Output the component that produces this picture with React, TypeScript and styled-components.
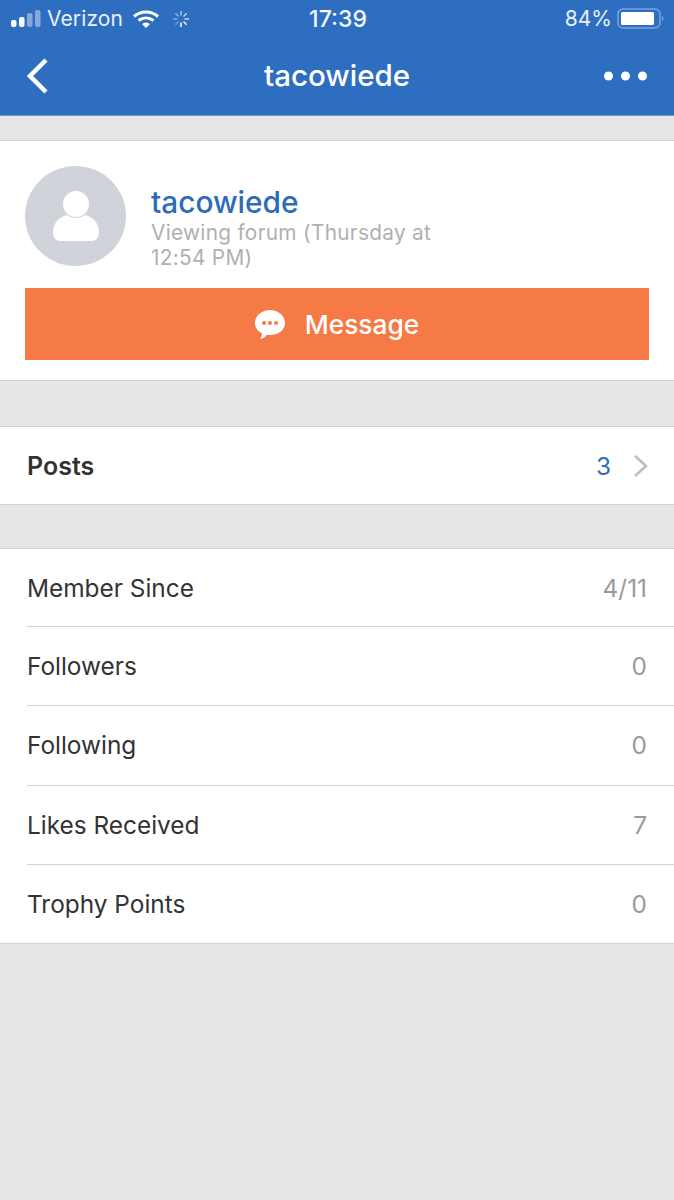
import React from "react";
import styled, { createGlobalStyle } from "styled-components";

const Global = createGlobalStyle`
  html, body { margin: 0; padding: 0; background: #e6e6e6; }
  body { font-family: Inter, "Liberation Sans", sans-serif; -webkit-font-smoothing: antialiased; }
`;
const Page = styled.div`width: 674px; height: 1200px; background: #e6e6e6; overflow: hidden;`;
const Header = styled.header`height: 115px; background: #2d6ec0; border-bottom: 1px solid #6f96c9; color: #fff; display: flex; flex-direction: column;`;
const StatusBar = styled.div`height: 37px; display: grid; grid-template-columns: 1fr auto 1fr; align-items: center; padding: 0 9px 0 11px; font-size: 21px; color: #e9f0f9;`;
const StatusLeft = styled.div`display: flex; align-items: center;`;
const StatusRight = styled.div`display: flex; align-items: center; justify-content: flex-end; gap: 5px;`;
const Carrier = styled.span`margin-left: 6px; margin-right: 10px; letter-spacing: 0.1px;`;
const Clock = styled.span`font-size: 23px; font-weight: 500; color: #f4f7fc;`;
const NavBar = styled.div`flex: 1; display: grid; grid-template-columns: 1fr auto 1fr; align-items: center; padding: 0 27px;`;
const BackIcon = styled.svg`margin-left: -2px;`;
const NavTitle = styled.div`font-size: 29.500px; font-weight: 500; margin-bottom: 2px;`;
const NavRight = styled.div`display: flex; justify-content: flex-end;`;
const Section = styled.section<{ $top: number }>`margin-top: ${(p) => p.$top}px; background: #fff; border-top: 1px solid #d3d3d3; border-bottom: 1px solid #d3d3d3;`;
const Profile = styled.div`padding: 25px 25px 20px; display: flex; flex-direction: column; gap: 22px;`;
const ProfileTop = styled.div`height: 100px; display: flex; align-items: flex-start; gap: 25px;`;
const Avatar = styled.div`width: 101px; height: 100px; flex: none; border-radius: 50%; background: #d0d4da; display: flex; align-items: center; justify-content: center;`;
const ProfileText = styled.div`width: 300px; padding-top: 18px;`;
const Name = styled.div`font-size: 29.800px; line-height: 36px; font-weight: 500; color: #2d6cb8;`;
const Status = styled.div`font-size: 20.800px; line-height: 25px; color: #b0b0b0; letter-spacing: 0.3px;`;
const MessageButton = styled.button`height: 72px; width: 100%; border: 0; padding: 0; border-radius: 1px; background: #f67a46; color: #fff; font: 500 26.300px Inter, sans-serif; display: flex; align-items: center; justify-content: center; gap: 20px;`;
const Row = styled.div`height: 77px; display: flex; align-items: center; justify-content: space-between; padding: 0 27px 0 0; margin-left: 27px; font-size: 24.400px; color: #333;
  & + & { height: 78.250px; border-top: 1px solid #d3d3d3; }`;
const PostsTitle = styled.span`font-size: 25px; font-weight: 600; color: #333;`;
const PostsRight = styled.div`display: flex; align-items: center; gap: 22px; color: #2d6cb8; margin-right: -2px;`;
const Value = styled.span`color: #9a9a9a;`;

const stats: [string, string][] = [
  ["Member Since", "4/11"],
  ["Followers", "0"],
  ["Following", "0"],
  ["Likes Received", "7"],
  ["Trophy Points", "0"],
];

export default function App() {
  return (
    <Page>
      <Global />
      <Header>
        <StatusBar>
          <StatusLeft>
            <svg width="30" height="18" viewBox="0 0 30 18">
              <rect x="0" y="10" width="5.500" height="7" rx="2" fill="#fff" />
              <rect x="8" y="7" width="5.500" height="10" rx="2" fill="#fff" />
              <rect x="16" y="3" width="5.500" height="14" rx="2" fill="#86a9da" />
              <rect x="24" y="0" width="5.500" height="17" rx="2" fill="#86a9da" />
            </svg>
            <Carrier>Verizon</Carrier>
            <svg width="26" height="18" viewBox="0 0 26 18">
              <path d="M1 6.500C8 0.500 18 0.500 25 6.500" fill="none" stroke="#fff" strokeWidth="3" />
              <path d="M5.500 10.500C10 7 16 7 20.500 10.500" fill="none" stroke="#fff" strokeWidth="3" />
              <path d="M9 14C11.500 12 14.500 12 17 14L13 18Z" fill="#fff" />
            </svg>
            <svg width="20" height="20" viewBox="0 0 20 20" style={{ marginLeft: 12 }}>
              {Array.from({ length: 8 }).map((_, i) => (
                <line key={i} x1="10" y1="2" x2="10" y2="6.500" stroke="#fff" strokeWidth="1.500" opacity={0.3 + (((i + 3) % 8) * 0.1)} transform={`rotate(${i * 45} 10 10)`} />
              ))}
            </svg>
          </StatusLeft>
          <Clock>17:39</Clock>
          <StatusRight>
            <span>84%</span>
            <svg width="48" height="22" viewBox="0 0 48 22">
              <rect x="1" y="1" width="42" height="19" rx="5" fill="none" stroke="#7ea4d8" strokeWidth="1.500" />
              <rect x="4" y="4" width="33" height="13" rx="1.500" fill="#fff" />
              <path d="M45 8c2 .5 2 4.500 0 5z" fill="#7ea4d8" />
            </svg>
          </StatusRight>
        </StatusBar>
        <NavBar>
          <BackIcon width="24" height="38" viewBox="0 0 24 38">
            <path d="M21 3L5 19L21 35" fill="none" stroke="#fff" strokeWidth="4.500" />
          </BackIcon>
          <NavTitle>tacowiede</NavTitle>
          <NavRight>
            <svg width="43" height="10" viewBox="0 0 43 10">
              <circle cx="4.500" cy="5" r="4.500" fill="#fff" />
              <circle cx="21.500" cy="5" r="4.500" fill="#fff" />
              <circle cx="38.500" cy="5" r="4.500" fill="#fff" />
            </svg>
          </NavRight>
        </NavBar>
      </Header>
      <Section $top={24}>
        <Profile>
          <ProfileTop>
            <Avatar>
              <svg width="46" height="50" viewBox="0 0 46 50">
                <circle cx="23" cy="13" r="13" fill="#fff" />
                <path d="M14 24C5 26 0 33 0 41C0 47 3 50 8 50H38C43 50 46 47 46 41C46 33 41 26 32 24C27 28 19 28 14 24Z" fill="#fff" />
              </svg>
            </Avatar>
            <ProfileText>
              <Name>tacowiede</Name>
              <Status>Viewing forum (Thursday at 12:54 PM)</Status>
            </ProfileText>
          </ProfileTop>
          <MessageButton>
            <svg width="30" height="29" viewBox="0 0 30 29">
              <path d="M15 0C23 0 30 5.500 30 13C30 20.500 23 25 15 25C14 25 13 25 12 24.800C10.500 27 8 28.500 5 29C6.500 27 7 25 6.800 23C2.500 21 0 17.500 0 13C0 5.500 7 0 15 0Z" fill="#fff" />
              <circle cx="9" cy="13" r="2" fill="#f67a46" />
              <circle cx="15" cy="13" r="2" fill="#f67a46" />
              <circle cx="21" cy="13" r="2" fill="#f67a46" />
            </svg>
            Message
          </MessageButton>
        </Profile>
      </Section>
      <Section $top={45}>
        <Row>
          <PostsTitle>Posts</PostsTitle>
          <PostsRight>
            <span>3</span>
            <svg width="16" height="24" viewBox="0 0 16 24">
              <path d="M2 2L13 12L2 22" fill="none" stroke="#bdbdbd" strokeWidth="2.500" />
            </svg>
          </PostsRight>
        </Row>
      </Section>
      <Section $top={43}>
        {stats.map(([label, value]) => (
          <Row key={label}>
            <span>{label}</span>
            <Value>{value}</Value>
          </Row>
        ))}
      </Section>
    </Page>
  );
}
